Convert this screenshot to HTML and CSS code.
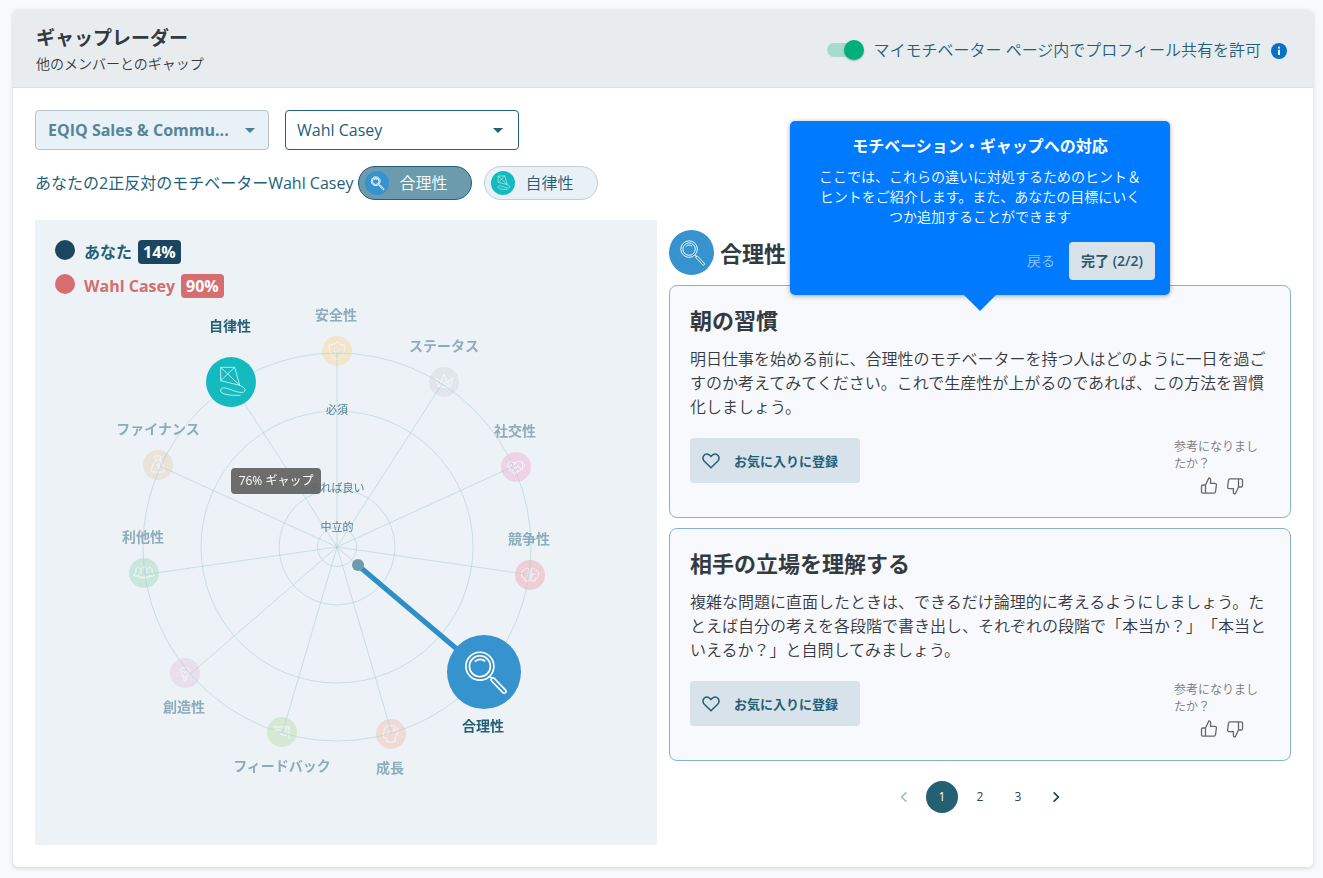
FILE: index.html
```html
<!DOCTYPE html>
<html lang="ja">
<head>
<meta charset="utf-8">
<meta name="viewport" content="width=device-width, initial-scale=1">
<title>ギャップレーダー</title>
<link rel="stylesheet" href="styles.css">
</head>
<body>
<svg class="symbols" aria-hidden="true">
  <symbol id="lens" viewBox="-25 -25 50 50">
    <circle cx="-2.7" cy="-3.8" r="9.2"/><circle cx="-2.7" cy="-3.8" r="6.9"/>
    <path d="M-6-6.8A4.8 4.8 0 0 1 .8-7M4 3l1.6 1.5M5 5.9a1.2 1.2 0 0 1 1.9-1.6l7.3 7.6a1.2 1.2 0 0 1-1.8 1.7z"/>
  </symbol>
  <symbol id="kite" viewBox="-25 -25 50 50">
    <path d="M-10.3-14.7H3.7L8.7 3.3-10.3-1.3zM-10.3-14.7 8.7 3.3M3.7-14.7l-14 13.4M8.7 3.3C13 5 15 7.500 13.500 9.500 12 11.500 6 10 2 8.500-3 6.500-9.500 4-10.300 8-11 12.500-2 13.500 9.500 13.300"/>
  </symbol>
  <symbol id="thumb" viewBox="0 0 18 18">
    <path d="M5.500 8 8.300 2c.4-1.500 2.300-1.200 2.300.6v3.700h4.300c1 0 1.700.8 1.500 1.700l-.9 6.700c-.1.900-.8 1.500-1.600 1.500H3c-.9 0-1.500-.6-1.500-1.500V9.300C1.500 8.500 2.100 8 3 8h2.500zM5.500 8v8"/>
  </symbol>
  <symbol id="heart" viewBox="0 0 18 16">
    <path d="M9 14.800 2.300 8.200C-1 4.500 3-1 7.200 1.800L9 3.500l1.800-1.700C15-1 19 4.500 15.700 8.200z"/>
  </symbol>
</svg>

<main class="card">
  <header class="card-head">
    <div>
      <h1 class="title">ギャップレーダー</h1>
      <p class="subtitle">他のメンバーとのギャップ</p>
    </div>
    <div class="share">
      <input class="switch" type="checkbox" id="share" checked>
      <label for="share">マイモチベーター ページ内でプロフィール共有を許可</label>
      <button class="info" type="button" aria-label="情報">
        <svg viewBox="0 0 16 16"><circle cx="8" cy="8" r="8"/><path d="M8 3.800v1.800M8 6.800v5.200"/></svg>
      </button>
    </div>
  </header>

  <div class="content">
    <div class="filters">
      <select class="select select-team" aria-label="チーム"><option>EQIQ Sales &amp; Commu...</option></select>
      <select class="select" aria-label="メンバー"><option>Wahl Casey</option></select>
    </div>
    <div class="opposites">
      <span>あなたの2正反対のモチベーターWahl Casey</span>
      <button class="chip chip-on" type="button"><svg class="chip-icon blue"><use href="#lens"/></svg>合理性</button>
      <button class="chip" type="button"><svg class="chip-icon teal"><use href="#kite"/></svg>自律性</button>
    </div>

    <div class="columns">
      <section class="radar">
        <ul class="legend">
          <li class="you"><i class="dot"></i>あなた<b class="percent">14%</b></li>
          <li class="other"><i class="dot"></i>Wahl Casey<b class="percent">90%</b></li>
        </ul>
        <svg class="chart" viewBox="-302 -327 622 625">
          <g class="faded">
            <g transform="translate(0 -196)"><circle r="15" fill="#f8d27e"/><path d="M0-9c3 2.500 5 3 8 3C8 2 6 6 0 8.500-6 6-8 2-8-6c3 0 5-.5 8-3zM-3 0l2 2 4-4"/></g>
            <g transform="translate(107 -165)"><circle r="15" fill="#cfd2d4"/><path d="M-9-4-5 5H6L9-4 3 1 0-8-5 5M-9-4 6 5M0-8 6 5M9-4-5 5"/></g>
            <g transform="translate(179 -80)"><circle r="15" fill="#f09cc8"/><path d="M-9-3-6-5.500-1-4 2-5.500 6-5 9-2 6 2-1 7-6 3-9-3zM-1-4-3 0l3 1 2-2 5 4M-4 4l3-3M-1 6l3-3M-7 1l3-4M6-5 7 1"/></g>
            <g transform="translate(193 28)"><circle r="15" fill="#f58b94"/><path d="M-1-6C-3-8-6-6-6-5-9-4-9 0-8 1-8 3-6 4-5 3v3h4zM1-6c2-2 5 0 5 1 3 1 3 5 2 6 0 2-2 3-3 2v3H1zM-5-1h3v3M5-1H2v3"/></g>
            <g transform="translate(54 187)"><circle r="15" fill="#f7b09d"/><path d="M-4 8V4h-3l-1-2 1-4C-7-11 7-11 7-2 7 1 4 2 4 4v4zM-4 1l3-4 2 2 3-4M2-5h2v2"/></g>
            <g transform="translate(-55 185)"><circle r="15" fill="#a9d795"/><path d="M-9-5H2L4-3v7l-4-2-3-3h-6M4-4h3v11M2-5l4-1 2 2M-7-2h6M-2 2l3 1 1-3"/></g>
            <g transform="translate(-152 126)"><circle r="15" fill="#dfb9da"/><path d="M-2 4C-2 1-4 0-4-2c0-5 8-5 8 0 0 2-2 3-2 6zM-1 4v4h2V4M-2-2l2 2 2-2"/><path stroke-dasharray="1 2" d="M-8 3a8 8 0 1 1 16 0"/></g>
            <g transform="translate(-193 26)"><circle r="15" fill="#87d2ae"/><path d="M-3-1c-1-7 7-7 6 0 0 2 3 1 3 5h-12c0-4 3-3 3-5zM-5 3h-5c0-3 2-3 2-4-1-6 4-5 4-3M5 3h5c0-3-2-3-2-4 1-6-4-5-4-3M-4 5h8"/></g>
            <g transform="translate(-179 -82)"><circle r="15" fill="#e6c8a4"/><path d="M-2-5-4-9h7l-1 4zM-2-5c-4 4-6 12-3 12H5C8 7 5-1 2-5M2-1c-4-1-4 2-1 2s3 3-1 2M1-2v6"/></g>
          </g>
          <g class="grid">
            <circle r="19.500"/><circle r="58"/><circle r="136"/><circle r="194"/>
            <path class="axis" d="M0 0V-194"/>
            <path d="M0 0 105-163M0 0 176.500-80.600M0 0 192 27.600M0 0 54.700 186M0 0-54.700 186M0 0-146.600 127M0 0-192 27.600M0 0-176.500-80.600M0 0-105-163M0 0 20 17.500"/>
          </g>
          <path class="gap" d="M20 17.500 147 125"/>
          <circle class="gap-start" cx="21" cy="18" r="6"/>
          <g class="active">
            <circle cx="-106" cy="-165" r="25" fill="#13bbc0"/>
            <use class="thin" href="#kite" x="-131" y="-190" width="50" height="50"/>
            <circle cx="147" cy="125" r="37" fill="#3793ce"/>
            <use href="#lens" x="109" y="87" width="76" height="76"/>
          </g>
          <g class="names">
            <text x="-1" y="-227">安全性</text>
            <text x="107" y="-196">ステータス</text>
            <text x="178" y="-111">社交性</text>
            <text x="192" y="-3">競争性</text>
            <text x="53" y="226">成長</text>
            <text x="-55" y="224">フィードバック</text>
            <text x="-153" y="165">創造性</text>
            <text x="-194" y="-5">利他性</text>
            <text x="-179" y="-113">ファイナンス</text>
            <text class="strong" x="-107" y="-216">自律性</text>
            <text class="strong" x="146" y="184">合理性</text>
          </g>
          <g class="levels">
            <text x="0" y="-133">必須</text>
            <text x="0" y="-55">あれば良い</text>
            <text x="0" y="-16">中立的</text>
          </g>
          <g class="hint">
            <rect x="-106" y="-79" width="90" height="26" rx="4"/>
            <text x="-61" y="-62">76% ギャップ</text>
          </g>
        </svg>
      </section>

      <section class="tips">
        <h2 class="tips-title"><svg class="tips-icon blue"><use href="#lens"/></svg>合理性</h2>
        <article class="tip">
          <h3>朝の習慣</h3>
          <p>明日仕事を始める前に、合理性のモチベーターを持つ人はどのように一日を過ごすのか考えてみてください。これで生産性が上がるのであれば、この方法を習慣化しましょう。</p>
          <div class="tip-foot">
            <button class="favorite" type="button"><svg><use href="#heart"/></svg>お気に入りに登録</button>
            <div class="rate">
              <span>参考になりましたか？</span>
              <div class="rate-buttons">
                <button type="button" aria-label="はい"><svg><use href="#thumb"/></svg></button>
                <button type="button" aria-label="いいえ"><svg class="down"><use href="#thumb"/></svg></button>
              </div>
            </div>
          </div>
        </article>
        <article class="tip">
          <h3>相手の立場を理解する</h3>
          <p>複雑な問題に直面したときは、できるだけ論理的に考えるようにしましょう。たとえば自分の考えを各段階で書き出し、それぞれの段階で「本当か？」「本当といえるか？」と自問してみましょう。</p>
          <div class="tip-foot">
            <button class="favorite" type="button"><svg><use href="#heart"/></svg>お気に入りに登録</button>
            <div class="rate">
              <span>参考になりましたか？</span>
              <div class="rate-buttons">
                <button type="button" aria-label="はい"><svg><use href="#thumb"/></svg></button>
                <button type="button" aria-label="いいえ"><svg class="down"><use href="#thumb"/></svg></button>
              </div>
            </div>
          </div>
        </article>
        <nav class="pager" aria-label="ページ">
          <button type="button" aria-label="前へ" disabled><svg viewBox="0 0 12 12"><path d="M8 2 4 6l4 4"/></svg></button>
          <button class="current" type="button">1</button>
          <button type="button">2</button>
          <button type="button">3</button>
          <button type="button" aria-label="次へ"><svg viewBox="0 0 12 12"><path d="m4 2 4 4-4 4"/></svg></button>
        </nav>

        <div class="tour" role="dialog" aria-labelledby="tour-title">
          <h4 id="tour-title">モチベーション・ギャップへの対応</h4>
          <p>ここでは、これらの違いに対処するためのヒント＆ヒントをご紹介します。また、あなたの目標にいくつか追加することができます</p>
          <div class="tour-actions">
            <button class="back" type="button">戻る</button>
            <button class="done" type="button">完了 (2/2)</button>
          </div>
        </div>
      </section>
    </div>
  </div>
</main>
</body>
</html>
```

FILE: styles.css
```css
* { box-sizing: border-box; }

body {
  margin: 0;
  padding: 10px 10px 11px 13px;
  background: #f8f9fc;
  color: #343a40;
  font-family: "Open Sans", "Noto Sans CJK JP", sans-serif;
  font-size: 16px;
  line-height: 24px;
  text-spacing-trim: space-all;
}

h1, h2, h3, h4, p, ul { margin: 0; padding: 0; }
button, select { font: inherit; color: inherit; }
button { padding: 0; border: 0; background: none; cursor: pointer; }
svg { display: block; }
use, symbol { fill: none; }
.symbols { position: absolute; width: 0; height: 0; }

.card {
  border-radius: 5px;
  background: #fff;
  box-shadow: 0 1px 4px rgba(30, 50, 70, .2);
}

.card-head {
  display: flex;
  align-items: center;
  justify-content: space-between;
  height: 78px;
  padding: 2px 26px 0 23px;
  border-bottom: 1px solid #dbe0e4;
  border-radius: 5px 5px 0 0;
  background: #e9ecef;
}
.title { font-size: 19px; font-weight: 600; line-height: 28px; }
.subtitle { font-size: 14px; font-weight: 350; line-height: 24px; }

.share { display: flex; align-items: center; color: #245f78; font-weight: 350; }
.switch {
  position: relative;
  width: 36px;
  height: 14px;
  margin: 0 10px 0 0;
  border-radius: 7px;
  background: #a6dccb;
  appearance: none;
}
.switch::before {
  content: "";
  position: absolute;
  top: -3px;
  right: -1px;
  width: 20px;
  height: 20px;
  border-radius: 50%;
  background: #00b07b;
  box-shadow: 0 1px 2px rgba(0, 0, 0, .25);
}
.info { margin: 3px 0 0 10px; }
.info svg { width: 16px; height: 16px; fill: #0770c9; }
.info path { fill: none; stroke: #fff; stroke-width: 2; }

.content { padding: 22px; }
.filters { display: flex; gap: 16px; }
.select {
  width: 234px;
  height: 40px;
  padding: 0 11px;
  border: 1px solid #245f78;
  border-radius: 4px;
  background: #fff url("data:image/svg+xml,%3Csvg xmlns='http://www.w3.org/2000/svg' width='10' height='5'%3E%3Cpath d='M0 0h10L5 5z' fill='%23245f78'/%3E%3C/svg%3E") no-repeat right 15px center;
  color: #245f78;
  appearance: none;
}
.select-team {
  padding-left: 12px;
  border-color: #b9c3c9;
  background-color: #e9f1f8;
  background-image: url("data:image/svg+xml,%3Csvg xmlns='http://www.w3.org/2000/svg' width='10' height='5'%3E%3Cpath d='M0 0h10L5 5z' fill='%234d8091'/%3E%3C/svg%3E");
  background-position: right 13px center;
  color: #568595;
  font-weight: 700;
}

.opposites {
  display: flex;
  align-items: center;
  gap: 12px;
  margin: 16px 0 20px;
  color: #245f78;
}
.opposites span { margin-right: -7px; }
.chip {
  display: flex;
  align-items: center;
  width: 114px;
  height: 34px;
  padding-left: 6px;
  gap: 10px;
  border: 1px solid #c6ced4;
  border-radius: 17px;
  background: #e9f1f8;
  font-weight: 350;
}
.chip-on { border-color: #245f78; background: #6b9bad; color: #fff; }
.chip-icon, .tips-icon {
  border-radius: 50%;
  stroke: #fff;
  stroke-linejoin: round;
}
.chip-icon { width: 24px; height: 24px; stroke-width: 1; }
.chip-on .chip-icon { stroke-width: 2; }
.blue { background: #3793ce; }
.teal { background: #13bbc0; }

.columns { display: grid; grid-template-columns: 1fr 1fr; gap: 12px; }

.radar { position: relative; background: #edf2f6; }
.chart { width: 100%; height: auto; }
.legend {
  position: absolute;
  top: 20px;
  left: 20px;
  display: grid;
  gap: 10px;
  list-style: none;
  font-weight: 600;
}
.legend li { display: flex; align-items: center; height: 24px; }
.dot { width: 20px; height: 20px; margin: 0 9px 4px 0; border-radius: 50%; background: currentColor; }
.percent {
  margin-left: 6px;
  padding: 0 5px;
  border-radius: 4px;
  color: #fff;
  font-weight: 700;
}
.you { color: #245f78; }
.you .dot, .you .percent { background: #1b465f; }
.other { color: #d66e6f; font-weight: 700; }
.other .percent { background: #d66e6f; }

.grid { fill: none; stroke: #a9cdd5; stroke-opacity: .55; stroke-width: 1; }
.axis { stroke-opacity: .28; stroke-width: 2; }
.faded { opacity: .35; }
.faded path { fill: none; stroke: #fff; stroke-width: 1; }
.gap { stroke: #2e8ec8; stroke-width: 5; }
.gap-start { fill: #6b9bad; }
.active { stroke-width: 1.100; }
.active use { stroke: #fff; stroke-linejoin: round; }
.active .thin { stroke-width: .7; }
.chart text { text-anchor: middle; }
.names { fill: #8eadb9; font-size: 14px; font-weight: 600; }
.names .strong { fill: #245f78; }
.levels { fill: #4b7d90; font-size: 11px; }
.hint rect { fill: #636363; fill-opacity: .93; }
.hint text { fill: #fff; font-size: 12px; }

.tips { position: relative; padding-top: 10px; }
.tips-title {
  display: flex;
  align-items: center;
  gap: 6px;
  margin-bottom: 10px;
  font-size: 22px;
  font-weight: 600;
}
.tips-icon { width: 45px; height: 45px; stroke-width: 1; }
.tip {
  padding: 19px 20px 22px;
  border: 1px solid #82b4cd;
  border-radius: 8px;
  background: #f8f9fd;
}
.tip + .tip { margin-top: 10px; }
.tip h3 { margin: 0 0 12px; font-size: 22px; font-weight: 600; line-height: 30px; }
.tip p { font-weight: 350; }
.tip-foot { display: flex; align-items: flex-start; justify-content: space-between; margin-top: 19px; }
.favorite {
  display: flex;
  align-items: center;
  gap: 14px;
  width: 170px;
  height: 45px;
  padding-left: 12px;
  border-radius: 4px;
  background: #d7e2ea;
  color: #245f78;
  font-size: 13px;
  font-weight: 600;
}
.favorite svg { width: 18px; height: 16px; stroke: #245f78; stroke-width: 1.5; }
.rate { width: 96px; color: #777; font-size: 12px; font-weight: 350; line-height: 17px; }
.rate span { display: block; padding-right: 8px; }
.rate-buttons { display: flex; justify-content: center; gap: 8px; margin-top: 5px; }
.rate-buttons svg { width: 18px; height: 18px; stroke: #666; stroke-width: 1.3; }
.down { transform: rotate(180deg); }

.pager { display: flex; justify-content: center; gap: 6px; margin-top: 20px; }
.pager button {
  display: flex;
  align-items: center;
  justify-content: center;
  width: 32px;
  height: 32px;
  border-radius: 50%;
  color: #1b465f;
  font-size: 12px;
}
.pager svg { width: 14px; height: 14px; fill: none; stroke: currentColor; stroke-width: 1.5; }
.pager button:disabled { color: #a9bcc5; }
.pager .current { background: #245f74; color: #fff; }

.tour {
  position: absolute;
  bottom: calc(100% - 75px);
  left: 50%;
  width: 380px;
  margin-left: -190px;
  padding: 13px 15px 15px;
  border-radius: 5px;
  background: #007bff;
  box-shadow: 0 1px 5px rgba(0, 0, 0, .35);
  color: #fff;
  text-align: center;
}
.tour::after {
  content: "";
  position: absolute;
  top: 100%;
  left: 50%;
  margin-left: -16px;
  border: 16px solid transparent;
  border-top-color: #007bff;
  border-bottom: 0;
}
.tour h4 { font-size: 16px; font-weight: 600; }
.tour p { padding: 0 13px; margin: 9px 0 15px; font-size: 14px; font-weight: 350; line-height: 20px; }
.tour-actions { display: flex; justify-content: flex-end; gap: 14px; font-size: 14px; }
.back { color: #8fc6ff; font-weight: 350; }
.done {
  height: 38px;
  padding: 0 12px;
  border-radius: 4px;
  background: #d7e2ea;
  color: #2b5769;
  font-weight: 600;
}
```
